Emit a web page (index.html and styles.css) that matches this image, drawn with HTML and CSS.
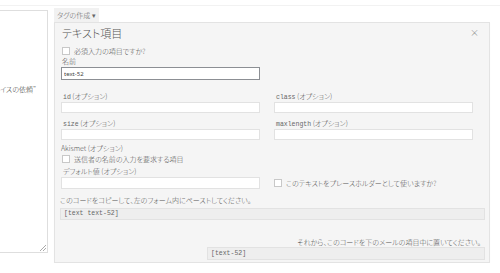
FILE: index.html
```html
<!DOCTYPE html>
<html lang="ja">
<head>
    <meta charset="UTF-8">
    <title>テキスト項目 - タグの作成</title>
    <link rel="stylesheet" href="styles.css">
</head>
<body>

<div class="topline"></div>

<div class="screen">
    <div class="form-area">
        <p>イスの依頼”</p>
        <svg class="grip" width="6" height="6" viewBox="0 0 6 6">
            <path d="M6 0 L0 6 M6 3 L3 6" stroke="#aaa" stroke-width="1"/>
        </svg>
    </div>

    <div class="editor">
        <div class="tag-tab">タグの作成 ▾</div>

        <div class="panel">
            <div class="panel-head">
                <h3>テキスト項目</h3>
                <span class="close">×</span>
            </div>

            <div class="check"><span class="box"></span>必須入力の項目ですか?</div>

            <label class="label">名前</label>
            <input class="input name" type="text" value="text-52">

            <div class="grid">
                <div>
                    <label class="label"><code>id</code> (オプション)</label>
                    <input class="input" type="text">
                </div>
                <div>
                    <label class="label"><code>class</code> (オプション)</label>
                    <input class="input" type="text">
                </div>
                <div class="next">
                    <label class="label"><code>size</code> (オプション)</label>
                    <input class="input" type="text">
                </div>
                <div class="next">
                    <label class="label"><code>maxlength</code> (オプション)</label>
                    <input class="input" type="text">
                </div>
            </div>

            <label class="label akismet">Akismet (オプション)</label>
            <div class="check tight"><span class="box"></span>送信者の名前の入力を要求する項目</div>

            <div class="grid default-row">
                <div>
                    <label class="label">デフォルト値 (オプション)</label>
                    <input class="input" type="text">
                </div>
                <div class="check side"><span class="box"></span>このテキストをプレースホルダーとして使いますか?</div>
            </div>

            <div class="note">このコードをコピーして、左のフォーム内にペーストしてください。</div>
            <div class="code wide">[text text-52]</div>

            <div class="note right">それから、このコードを下のメールの項目中に置いてください。</div>
            <div class="code short">[text-52]</div>
        </div>
    </div>
</div>

</body>
</html>
```

FILE: styles.css
```css
body {
    margin: 0;
    background-color: #fff;
    font-family: "Noto Sans CJK JP", "Noto Sans", sans-serif;
    font-size: 7px;
    font-weight: 300;
    color: #555;
    font-feature-settings: "palt";
}
code {
    font-family: "Liberation Mono", monospace;
    font-size: 6.5px;
    color: #666;
}
.topline {
    height: 5px;
    border-bottom: 1px solid #f2f2f2;
}
.screen {
    display: flex;
    gap: 6px;
}

/* left form textarea */
.form-area {
    box-sizing: border-box;
    width: 49px;
    height: 243px;
    margin: 4px 0 0 -1px;
    border: 1px solid #dedede;
    display: flex;
    flex-direction: column;
    overflow: hidden;
}
.form-area p {
    margin: 74px 0 0 0;
    line-height: 9px;
    white-space: nowrap;
    color: #444;
}
.grip {
    margin: auto 1px 1px auto;
}

/* tag generator */
.editor {
    width: 436px;
}
.tag-tab {
    width: fit-content;
    margin-top: 2px;
    height: 14px;
    line-height: 14px;
    padding: 0 3px;
    background-color: #f1f1f1;
    color: #666;
}
.panel {
    box-sizing: border-box;
    height: 241px;
    padding: 3px 4px 0 6px;
    background-color: #f5f5f5;
    border: 1px solid #e3e3e3;
    box-shadow: 0 1px 1px rgba(0,0,0,0.04);
}
.panel-head {
    display: flex;
    justify-content: space-between;
    height: 14px;
    line-height: 14px;
}
.panel-head h3 {
    margin: 0 0 0 1px;
    font-size: 11px;
    font-weight: 300;
    color: #555;
}
.close {
    margin-right: 6px;
    font-size: 9px;
    color: #888;
}
.check {
    display: flex;
    align-items: center;
    height: 10px;
    margin-top: 6px;
    padding-left: 1px;
}
.check.tight {
    height: 9px;
    margin-top: 1px;
}
.box {
    box-sizing: border-box;
    width: 8px;
    height: 8px;
    margin-right: 4px;
    border: 1px solid #c8c8c8;
    background-color: #fff;
}
.label {
    display: block;
    height: 9px;
    line-height: 9px;
    margin-top: 1px;
    padding-left: 1px;
}
.grid .label {
    padding-left: 2px;
}
.input {
    display: block;
    box-sizing: border-box;
    width: 199px;
    height: 11px;
    margin: 1px 0 0 0;
    padding: 0 2px;
    border: 1px solid #e2e2e2;
    background-color: #fff;
    font-family: "Noto Sans", sans-serif;
    font-size: 6px;
    color: #444;
    outline: none;
}
.input.name {
    height: 13px;
    border-color: #8c8f94;
}
.grid {
    display: grid;
    grid-template-columns: 199px 199px;
    column-gap: 14px;
    margin-top: 11px;
}
.grid .next {
    margin-top: 5px;
}
.akismet {
    margin-top: 4px;
    padding-left: 0;
}
.default-row {
    margin-top: 3px;
}
.default-row .input {
    height: 12px;
}
.check.side {
    align-self: end;
    height: 12px;
    margin: 0;
    padding: 0;
}
.note {
    height: 9px;
    line-height: 9px;
    margin-top: 7px;
    margin-left: -1px;
}
.note.right {
    margin-top: 18px;
    text-align: right;
    padding-right: 4px;
}
.code {
    box-sizing: border-box;
    margin-top: 3px;
    padding-left: 3px;
    background-color: #eee;
    border: 1px solid #e2e2e2;
    font-family: "Liberation Mono", monospace;
    font-size: 6.5px;
    color: #666;
}
.code.wide {
    height: 12px;
    line-height: 10px;
    margin-left: -1px;
}
.code.short {
    width: 278px;
    height: 13px;
    line-height: 11px;
    margin: 0 0 0 auto;
}
```
